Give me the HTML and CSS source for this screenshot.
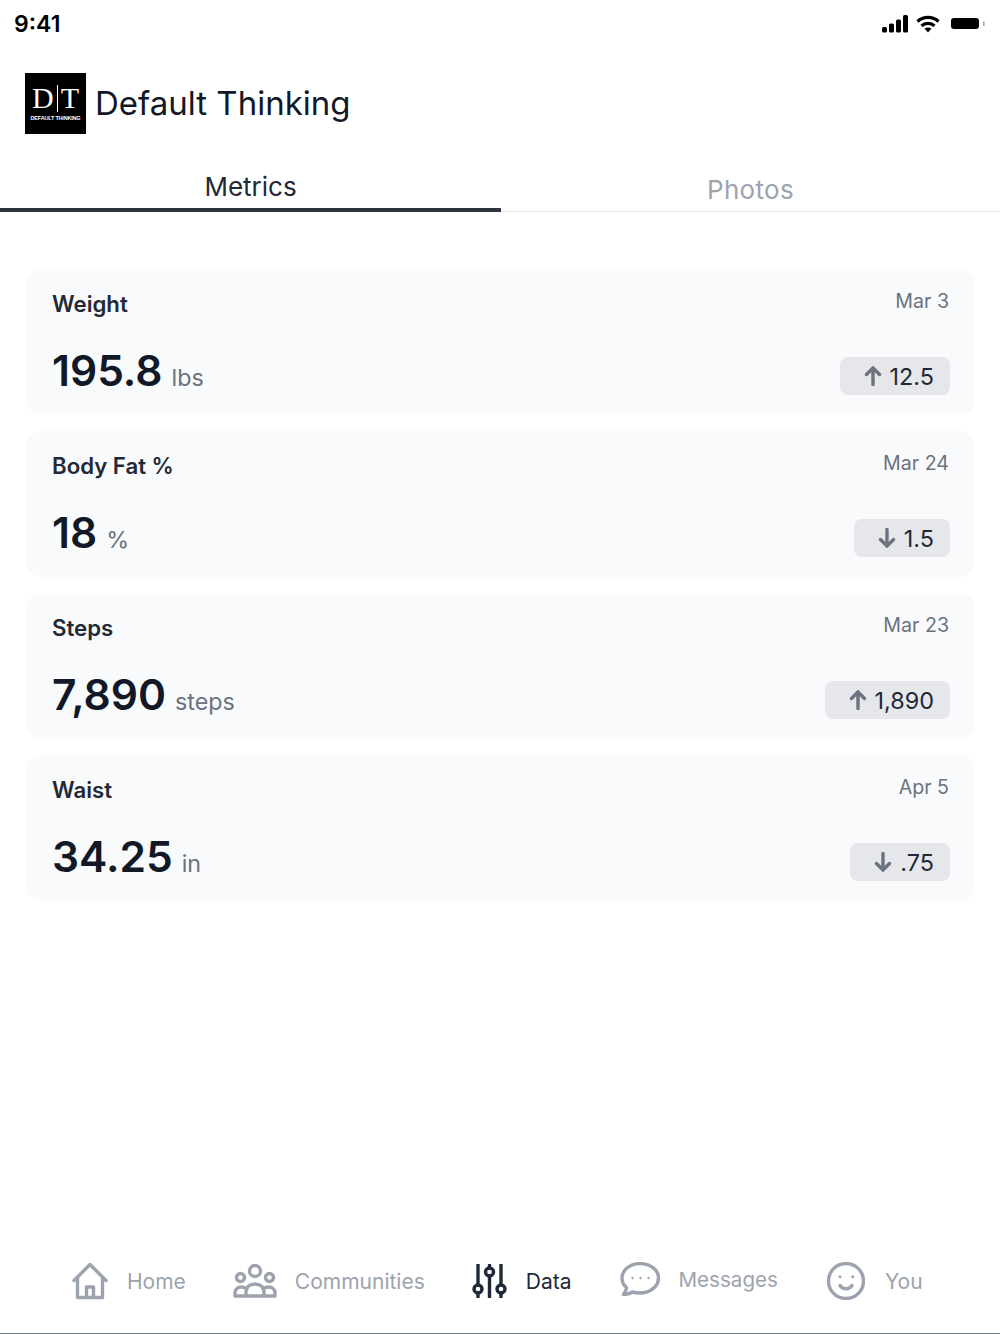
FILE: index.html
```html
<!DOCTYPE html>
<html lang="en">
<head>
  <meta charset="UTF-8" />
  <meta name="viewport" content="width=device-width, initial-scale=1.0" />
  <title>Default Thinking</title>
  <link rel="stylesheet" href="styles.css">
</head>
<body>
  <div class="app">
    <div class="status-bar">
      <span class="time">9:41</span>
      <div class="status-icons">
        <svg width="26" height="18" viewBox="0 0 26 18"><rect x="0" y="12" width="5" height="5.500" rx="1.500"/><rect x="7" y="8.500" width="5" height="9" rx="1.500"/><rect x="14" y="4.500" width="5" height="13" rx="1.500"/><rect x="21" y="0" width="5" height="17.500" rx="1.500"/></svg>
        <svg width="24" height="18" viewBox="0 0 24 18"><path d="M1.500 6.500C7 1 17 1 22.500 6.500" fill="none" stroke="#000" stroke-width="3.200"/><path d="M5.500 10.800C9 7.500 15 7.500 18.500 10.800" fill="none" stroke="#000" stroke-width="3.200"/><path d="M8.500 13.500C10.500 12 13.500 12 15.500 13.500L12 17.500Z"/></svg>
        <svg class="battery" width="36" height="14" viewBox="0 0 36 14"><rect x="0" y="1" width="28" height="11" rx="3"/><rect x="32" y="4.500" width="1.600" height="4.500" fill="#aaa"/></svg>
      </div>
    </div>

    <header class="brand">
      <div class="logo">
        <div class="logo-mark">D<i></i>T</div>
        <div class="logo-sub">DEFAULT THINKING</div>
      </div>
      <h1>Default Thinking</h1>
    </header>

    <nav class="tabs">
      <a class="tab active">Metrics</a>
      <a class="tab">Photos</a>
    </nav>

    <main class="metrics">
      <section class="card">
        <div class="card-top"><h2>Weight</h2><span class="date">Mar 3</span></div>
        <div class="card-bottom">
          <div class="value">195.8<small>lbs</small></div>
          <div class="delta"><svg class="arrow" viewBox="0 0 18 20"><path d="M9 18.500V2M2.500 8.500L9 2l6.500 6.500"/></svg>12.5</div>
        </div>
      </section>
      <section class="card">
        <div class="card-top"><h2>Body Fat %</h2><span class="date">Mar 24</span></div>
        <div class="card-bottom">
          <div class="value">18<small>%</small></div>
          <div class="delta"><svg class="arrow" viewBox="0 0 18 20"><path d="M9 1.500V18M2.500 11.500L9 18l6.500-6.500"/></svg>1.5</div>
        </div>
      </section>
      <section class="card">
        <div class="card-top"><h2>Steps</h2><span class="date">Mar 23</span></div>
        <div class="card-bottom">
          <div class="value">7,890<small>steps</small></div>
          <div class="delta"><svg class="arrow" viewBox="0 0 18 20"><path d="M9 18.500V2M2.500 8.500L9 2l6.500 6.500"/></svg>1,890</div>
        </div>
      </section>
      <section class="card">
        <div class="card-top"><h2>Waist</h2><span class="date">Apr 5</span></div>
        <div class="card-bottom">
          <div class="value">34.25<small>in</small></div>
          <div class="delta"><svg class="arrow" viewBox="0 0 18 20"><path d="M9 1.500V18M2.500 11.500L9 18l6.500-6.500"/></svg>.75</div>
        </div>
      </section>
    </main>

    <footer class="bottom-nav">
      <a class="nav-item home">
        <svg width="36" height="38" viewBox="0 0 36 38"><path d="M2 18.500L18 2.500l16 16M5.500 15.500V35.500h25V15.500M14.500 35.500V25h7v10.500"/></svg>
        Home
      </a>
      <a class="nav-item communities">
        <svg width="44" height="34" viewBox="0 0 44 34"><circle cx="22" cy="7" r="5.500"/><circle cx="7.500" cy="13.500" r="4"/><circle cx="36.500" cy="13.500" r="4"/><path d="M2 32h40M13 32v-4c0-5 4-8 9-8s9 3 9 8v4M2 32v-3c0-4 3-6 6.500-6 2 0 4 .5 5.500 2M42 32v-3c0-4-3-6-6.500-6-2 0-4 .5-5.500 2"/></svg>
        Communities
      </a>
      <a class="nav-item data active">
        <svg width="36" height="34" viewBox="0 0 36 34"><path d="M6 1v20M6 29v4M17.500 1v3M17.500 12v21M29 1v20M29 29v4"/><circle cx="6" cy="25" r="4"/><circle cx="17.500" cy="8" r="4"/><circle cx="29" cy="25" r="4"/></svg>
        Data
      </a>
      <a class="nav-item messages">
        <svg width="40" height="34" viewBox="0 0 40 34"><path d="M20 1.500C10 1.500 2 8 2 16c0 4 1.500 7 4.500 9.500 0 2.500-1.500 5-3 7 3.500 0 6.500-1 9-2.500 2 .6 4.500 1 7.500 1 10 0 18.500-6.500 18.500-15S30 1.500 20 1.500z"/><g class="dots"><circle cx="12.500" cy="16" r="1.200"/><circle cx="20.500" cy="16" r="1.200"/><circle cx="28.500" cy="16" r="1.200"/></g></svg>
        Messages
      </a>
      <a class="nav-item you">
        <svg width="38" height="38" viewBox="0 0 38 38"><circle cx="19" cy="19" r="17.500"/><path d="M13 23.500c3 4.500 9 4.500 12 0"/><g class="dots"><circle cx="13" cy="14.700" r="1.500"/><circle cx="25.700" cy="14.700" r="1.500"/></g></svg>
        You
      </a>
    </footer>
  </div>
</body>
</html>
```

FILE: styles.css
```css
* {
  box-sizing: border-box;
}
html, body {
  margin: 0;
  height: 100%;
}
body {
  background: #ffffff;
  font-family: Inter, "Liberation Sans", sans-serif;
  color: #111827;
}
.app {
  height: 1334px;
  display: flex;
  flex-direction: column;
}

/* status bar */
.status-bar {
  height: 48px;
  padding: 0 13px 0 14px;
  display: flex;
  justify-content: space-between;
  align-items: center;
}
.time {
  font-size: 23px;
  font-weight: 600;
  color: #000;
}
.status-icons {
  display: flex;
  align-items: center;
  gap: 8px;
}
.status-icons svg {
  display: block;
}
.status-icons .battery {
  margin-left: 3px;
}

/* brand row */
.brand {
  margin-top: 25px;
  padding-left: 25px;
  display: flex;
  align-items: center;
  gap: 9px;
}
.brand h1 {
  margin: 0 0 2px;
  font-size: 33px;
  font-weight: 400;
  color: #111827;
}
.logo {
  width: 61px;
  height: 61px;
  background: #000;
  color: #fff;
  display: flex;
  flex-direction: column;
  align-items: center;
  padding-top: 10px;
}
.logo-mark {
  font-family: "Liberation Serif", serif;
  font-size: 30px;
  line-height: 30px;
  display: flex;
  align-items: center;
  gap: 3px;
}
.logo-mark i {
  width: 1px;
  height: 27px;
  background: #fff;
}
.logo-sub {
  margin-top: 2px;
  font-family: "Liberation Sans", sans-serif;
  font-size: 5.500px;
  font-weight: 700;
  letter-spacing: -0.2px;
  white-space: nowrap;
}

/* tabs */
.tabs {
  margin-top: 30px;
  display: flex;
  border-bottom: 1px solid #e5e7eb;
  height: 48px;
}
.tab {
  flex: 1;
  text-align: center;
  font-size: 26px;
  line-height: 32px;
  padding-top: 10px;
  color: #9ca3af;
  letter-spacing: 0.3px;
}
.tab.active {
  flex: 0 0 501px;
  padding-top: 7px;
  color: #1f2937;
  border-bottom: 4px solid #2f3540;
  margin-bottom: -1px;
  letter-spacing: 0;
}

/* metric cards */
.metrics {
  padding: 57px 25px 0 26px;
  display: flex;
  flex-direction: column;
  gap: 16px;
}
.card {
  height: 146px;
  background: #f9fafb;
  border-radius: 16px;
  padding: 18px 26px 20px;
  display: flex;
  flex-direction: column;
  justify-content: space-between;
}
.card-top {
  display: flex;
  justify-content: space-between;
  align-items: flex-start;
}
.card-top h2 {
  margin: 0;
  font-size: 22.200px;
  line-height: 33px;
  font-weight: 600;
  color: #1f2937;
}
.date {
  font-size: 19.600px;
  line-height: 29px;
  color: #6b7280;
}
.card-bottom {
  display: flex;
  justify-content: space-between;
  align-items: flex-end;
}
.value {
  display: flex;
  align-items: baseline;
  gap: 9px;
  font-size: 42.500px;
  line-height: 34px;
  font-weight: 600;
  color: #111827;
}
.value small {
  font-size: 23.300px;
  font-weight: 400;
  color: #6b7280;
}
.delta {
  height: 38px;
  margin-right: -1px;
  padding: 0 16px 0 24px;
  background: #e5e7eb;
  border-radius: 8px;
  display: flex;
  align-items: center;
  gap: 8px;
  font-size: 23.400px;
  color: #1f2937;
}
.arrow {
  width: 18px;
  height: 20px;
  fill: none;
  stroke: #6b7280;
  stroke-width: 3.400;
  stroke-linecap: round;
}

/* bottom nav */
.bottom-nav {
  margin-top: auto;
  height: 94px;
  padding-left: 72px;
  display: flex;
  align-items: flex-start;
  border-bottom: 1px solid #6b7280;
}
.nav-item {
  display: flex;
  align-items: center;
  height: 82px;
  font-size: 21px;
  color: #9ca3af;
}
.nav-item svg {
  fill: none;
  stroke: currentColor;
  stroke-width: 3.400;
  stroke-linecap: round;
  stroke-linejoin: round;
}
.nav-item .dots {
  fill: currentColor;
  stroke: none;
}
.nav-item.active {
  color: #1f2937;
}
.home { gap: 19px; }
.communities { gap: 18px; margin-left: 47px; }
.data { gap: 18px; margin-left: 47px; }
.messages { gap: 18px; margin-left: 49px; margin-top: -2px; font-size: 20.600px; }
.you { gap: 20px; margin-left: 49px; }
```
